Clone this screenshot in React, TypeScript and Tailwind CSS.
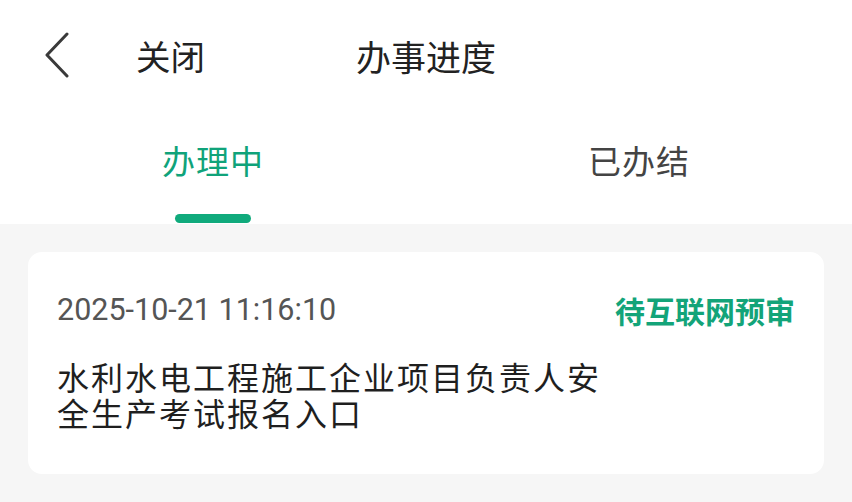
const cjk = "font-['Noto_Sans_CJK_SC',sans-serif]"

export default function App() {
  return (
    <div className={`h-[502px] w-[852px] overflow-hidden bg-[#f6f6f6] ${cjk}`}>
      <div className="bg-white">
        <header className="flex h-[114px] items-center pb-[4px]">
          <div className="flex w-[136px] items-center pl-[44px]">
            <svg width="26" height="46" viewBox="0 0 26 46" fill="none">
              <polyline
                points="23,2 3,23 23,44"
                stroke="#3a3a3a"
                strokeWidth="3"
                strokeLinecap="round"
                strokeLinejoin="round"
              />
            </svg>
          </div>
          <span className="w-[220px] text-[34.5px] leading-none text-[#222]">关闭</span>
          <h1 className="text-[35px] leading-none text-[#222]">办事进度</h1>
        </header>

        <nav className="grid h-[110px] grid-cols-2">
          <div className="flex flex-col items-center pt-[26px]">
            <span className="text-[33px] leading-[40px] tracking-[1px] text-[#10a37a]">办理中</span>
            <div className="mt-[34px] h-[9px] w-[76px] rounded-full bg-[#10aa7c]" />
          </div>
          <div className="flex flex-col items-center pt-[26px]">
            <span className="text-[33px] leading-[40px] tracking-[1px] text-[#444]">已办结</span>
          </div>
        </nav>
      </div>

      <div className="px-[28px] pt-[28px]">
        <div className="h-[222px] rounded-[14px] bg-white px-[29px] pt-[36px]">
          <div className="flex items-center justify-between">
            <span className="font-['Roboto',sans-serif] text-[30.5px] leading-[44px] text-[#555]">
              2025-10-21 11:16:10
            </span>
            <span className="text-[30px] font-bold leading-[44px] text-[#13a479]">待互联网预审</span>
          </div>
          <p className="mt-[26px] max-w-[552px] text-[32px] leading-[36px] tracking-[2px] text-[#1f1f1f]">
            水利水电工程施工企业项目负责人安全生产考试报名入口
          </p>
        </div>
      </div>
    </div>
  )
}
